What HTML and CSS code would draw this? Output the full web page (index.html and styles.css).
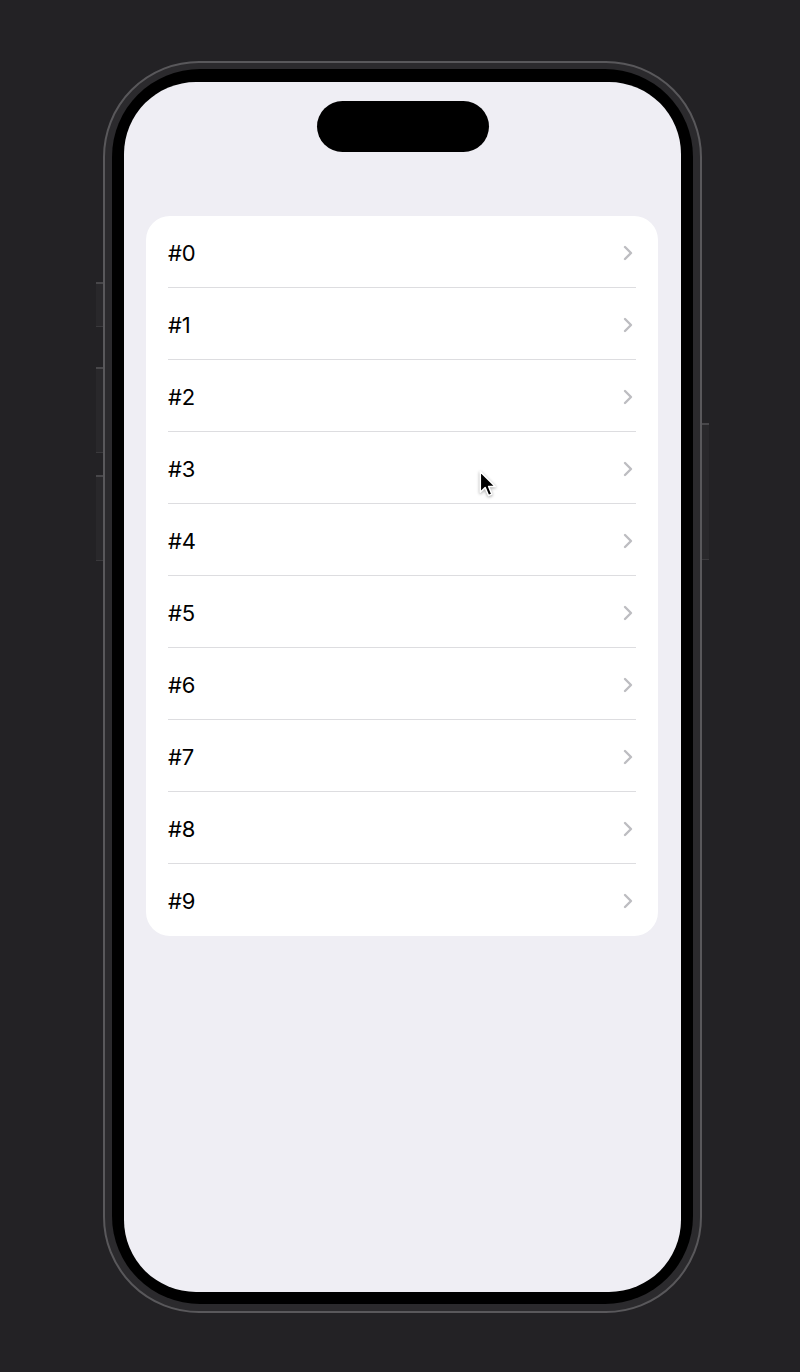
FILE: index.html
```html
<!DOCTYPE html>
<html lang="en">
<head>
<meta charset="utf-8">
<title>List</title>
<link rel="stylesheet" href="styles.css">
</head>
<body>
<div class="phone">
  <div class="btn btn-action"></div>
  <div class="btn btn-volup"></div>
  <div class="btn btn-voldown"></div>
  <div class="btn btn-power"></div>
  <div class="bezel">
    <div class="screen">
      <div class="island"></div>
      <div class="card">
        <div class="row"><span class="label">#0</span><svg class="chev" viewBox="0 0 10 16"><polyline points="2,2 8,8 2,14"/></svg></div>
        <div class="row"><span class="label">#1</span><svg class="chev" viewBox="0 0 10 16"><polyline points="2,2 8,8 2,14"/></svg></div>
        <div class="row"><span class="label">#2</span><svg class="chev" viewBox="0 0 10 16"><polyline points="2,2 8,8 2,14"/></svg></div>
        <div class="row"><span class="label">#3</span><svg class="chev" viewBox="0 0 10 16"><polyline points="2,2 8,8 2,14"/></svg></div>
        <div class="row"><span class="label">#4</span><svg class="chev" viewBox="0 0 10 16"><polyline points="2,2 8,8 2,14"/></svg></div>
        <div class="row"><span class="label">#5</span><svg class="chev" viewBox="0 0 10 16"><polyline points="2,2 8,8 2,14"/></svg></div>
        <div class="row"><span class="label">#6</span><svg class="chev" viewBox="0 0 10 16"><polyline points="2,2 8,8 2,14"/></svg></div>
        <div class="row"><span class="label">#7</span><svg class="chev" viewBox="0 0 10 16"><polyline points="2,2 8,8 2,14"/></svg></div>
        <div class="row"><span class="label">#8</span><svg class="chev" viewBox="0 0 10 16"><polyline points="2,2 8,8 2,14"/></svg></div>
        <div class="row"><span class="label">#9</span><svg class="chev" viewBox="0 0 10 16"><polyline points="2,2 8,8 2,14"/></svg></div>
      </div>
    </div>
  </div>
</div>
<svg class="cursor" viewBox="0 0 14 22" width="18" height="29">
  <path d="M1 1 L1 17 L4.8 13.4 L7.4 19.6 L10 18.5 L7.5 12.5 L12.6 12.5 Z"/>
</svg>
</body>
</html>
```
FILE: styles.css
```css
html, body {
  margin: 0;
  padding: 0;
}
body {
  background: #232225;
  width: 800px;
  height: 1372px;
  overflow: hidden;
  position: relative;
  font-family: Inter, "Liberation Sans", Arial, sans-serif;
}
.phone {
  position: relative;
  margin: 61px 0 0 103px;
  width: 599px;
  height: 1252px;
  box-sizing: border-box;
  border: 2px solid #59585b;
  border-radius: 96px;
  background: #2b2a2d;
  padding: 6px 7px 7px 7px;
}
.bezel {
  height: 100%;
  box-sizing: border-box;
  background: #000;
  border-radius: 88px;
  padding: 13px 12px 12px 12px;
}
.screen {
  height: 100%;
  background: #efeef4;
  border-radius: 72px;
  overflow: hidden;
  padding-top: 19px;
  box-sizing: border-box;
}
.island {
  width: 172px;
  height: 51px;
  border-radius: 26px;
  background: #000;
  margin: 0 auto;
}
.card {
  margin: 64px 23px 0 22px;
  background: #fff;
  border-radius: 24px;
}
.row {
  display: flex;
  align-items: center;
  justify-content: space-between;
  height: 72px;
  margin: 0 22px;
  box-sizing: border-box;
  border-bottom: 1px solid #dddde0;
}
.row:last-child {
  border-bottom: none;
}
.label {
  font-size: 22px;
  color: #000;
  letter-spacing: -0.1px;
  padding-top: 2px;
}
.chev {
  width: 10px;
  height: 16px;
  margin-right: 3px;
  margin-top: 2px;
}
.chev polyline {
  fill: none;
  stroke: #bdbdc1;
  stroke-width: 2.4;
  stroke-linecap: round;
  stroke-linejoin: round;
}
.btn {
  position: absolute;
  width: 7px;
  background: #29282b;
  border-top: 2px solid #48474a;
  border-bottom: 1px solid #3a393c;
  box-sizing: border-box;
}
.btn-action { left: -9px; top: 219px; height: 45px; }
.btn-volup { left: -9px; top: 304px; height: 86px; }
.btn-voldown { left: -9px; top: 412px; height: 86px; }
.btn-power { right: -9px; top: 360px; height: 137px; }
.cursor {
  position: absolute;
  left: 479px;
  top: 470px;
  filter: drop-shadow(0 1px 1.5px rgba(0,0,0,0.35));
}
.cursor path {
  fill: #000;
  stroke: #fff;
  stroke-width: 1.2;
  stroke-linejoin: round;
}
```
